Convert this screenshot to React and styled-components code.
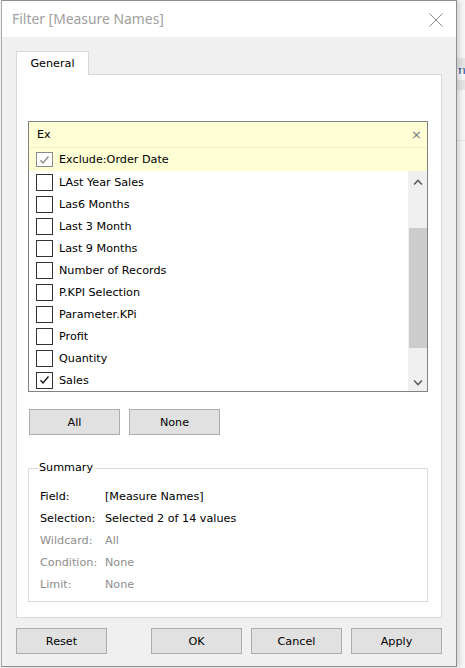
import React from 'react';
import styled, {createGlobalStyle} from 'styled-components';

const items = [
    {label: 'LAst Year Sales', checked: false},
    {label: 'Las6 Months', checked: false},
    {label: 'Last 3 Month', checked: false},
    {label: 'Last 9 Months', checked: false},
    {label: 'Number of Records', checked: false},
    {label: 'P.KPI Selection', checked: false},
    {label: 'Parameter.KPi', checked: false},
    {label: 'Profit', checked: false},
    {label: 'Quantity', checked: false},
    {label: 'Sales', checked: true},
];

const summary = [
    {label: 'Field:', value: '[Measure Names]', muted: false},
    {label: 'Selection:', value: 'Selected 2 of 14 values', muted: false},
    {label: 'Wildcard:', value: 'All', muted: true},
    {label: 'Condition:', value: 'None', muted: true},
    {label: 'Limit:', value: 'None', muted: true},
];

const CheckMark = ({color}) => (
    <svg width="11" height="10" viewBox="0 0 11 10">
        <path d="M1.5 5.2 L4 8 L9.5 1.5" fill="none" stroke={color} strokeWidth="1.4"/>
    </svg>
);

const Chevron = ({up}) => (
    <svg width="10" height="6" viewBox="0 0 10 6">
        <path d={up ? 'M1 5.5 L5 1.5 L9 5.5' : 'M1 0.5 L5 4.5 L9 0.5'} fill="none" stroke="#606060" strokeWidth="1.6"/>
    </svg>
);

const App = () => {
    return (
        <>
            <GlobalStyle/>
            <Screen>
                <Dialog>
                    <TitleBar>
                        <Title>Filter [Measure Names]</Title>
                        <CloseButton>
                            <svg width="14" height="14" viewBox="0 0 14 14">
                                <path d="M0.5 0.5 L13.5 13.5 M13.5 0.5 L0.5 13.5" stroke="#8a8a8a" strokeWidth="1"/>
                            </svg>
                        </CloseButton>
                    </TitleBar>
                    <Body>
                        <Tabs>
                            <Tab>General</Tab>
                        </Tabs>
                        <Panel>
                            <ListBox>
                                <SearchRow>
                                    <span>Ex</span>
                                    <ClearIcon>×</ClearIcon>
                                </SearchRow>
                                <ListRow $highlight>
                                    <CheckBox $disabled $h={15}>
                                        <CheckMark color="#8c8c8c"/>
                                    </CheckBox>
                                    <span>Exclude:Order Date</span>
                                </ListRow>
                                <ScrollArea>
                                    <Rows>
                                        {
                                            items.map((item, index) => (
                                                <ListRow key={index}>
                                                    <CheckBox>
                                                        {item.checked && <CheckMark color="#1a1a1a"/>}
                                                    </CheckBox>
                                                    <span>{item.label}</span>
                                                </ListRow>
                                            ))
                                        }
                                    </Rows>
                                    <ScrollBar>
                                        <Arrow><Chevron up/></Arrow>
                                        <Track>
                                            <Thumb/>
                                        </Track>
                                        <Arrow><Chevron/></Arrow>
                                    </ScrollBar>
                                </ScrollArea>
                            </ListBox>
                            <ButtonRow>
                                <Button>All</Button>
                                <Button>None</Button>
                            </ButtonRow>
                            <Summary>
                                <Legend>Summary</Legend>
                                {
                                    summary.map((row, index) => (
                                        <SummaryRow key={index} $muted={row.muted}>
                                            <SummaryLabel>{row.label}</SummaryLabel>
                                            <span>{row.value}</span>
                                        </SummaryRow>
                                    ))
                                }
                            </Summary>
                        </Panel>
                        <Footer>
                            <Button>Reset</Button>
                            <FooterRight>
                                <Button>OK</Button>
                                <Button>Cancel</Button>
                                <Button>Apply</Button>
                            </FooterRight>
                        </Footer>
                    </Body>
                </Dialog>
                <Backdrop>
                    <BackdropText>m</BackdropText>
                    <BackdropLine $top={60} $h={1}/>
                    <BackdropLine $top={19} $h={10}/>
                    <BackdropLine $top={30} $h={10}/>
                </Backdrop>
            </Screen>
        </>
    )
}

const GlobalStyle = createGlobalStyle`
  * {
    box-sizing: border-box;
  }

  body {
    margin: 0;
    background: #fbfbfb;
    font-family: "DejaVu Sans", Tahoma, sans-serif;
    font-size: 11.2px;
    color: #000;
  }
`;

const Screen = styled.div`
  display: flex;
  width: 465px;
  height: 668px;
  overflow: hidden;
`;

const Dialog = styled.div`
  margin-left: 1px;
  width: 456px;
  height: 667px;
  flex-shrink: 0;
  border: 1px solid #8f8f8f;
  border-left-color: #a8a8a8;
  background: #f0f0f0;
  display: flex;
  flex-direction: column;
  box-shadow: 2px 0 6px rgba(0, 0, 0, 0.18);
  position: relative;
  z-index: 1;
`;

const TitleBar = styled.div`
  height: 36px;
  background: #fff;
  display: flex;
  align-items: center;
  justify-content: space-between;
  padding: 0 13px 0 10px;
  flex-shrink: 0;
`;

const Title = styled.div`
  font-family: "Noto Sans", "Open Sans", sans-serif;
  font-size: 13.9px;
  color: #a0a0a0;
  margin-top: -1px;
`;

const CloseButton = styled.div`
  display: flex;
  margin-top: 1px;
`;

const Body = styled.div`
  flex: 1;
  padding: 14px 14px 0;
  display: flex;
  flex-direction: column;
`;

const Tabs = styled.div`
  display: flex;
  height: 23px;
`;

const Tab = styled.div`
  width: 73px;
  height: 24px;
  background: #fff;
  border: 1px solid #d9d9d9;
  border-bottom: none;
  display: flex;
  align-items: center;
  justify-content: center;
  position: relative;
  z-index: 1;
  padding-bottom: 1px;
`;

const Panel = styled.div`
  height: 544px;
  background: #fff;
  border: 1px solid #d9d9d9;
  padding: 46px 13px 0 11px;
  display: flex;
  flex-direction: column;
`;

const ListBox = styled.div`
  height: 271px;
  border: 1px solid #828282;
  display: flex;
  flex-direction: column;
  overflow: hidden;
`;

const SearchRow = styled.div`
  height: 26px;
  flex-shrink: 0;
  background: #ffffd6;
  border-bottom: 1px solid #f2f2c8;
  display: flex;
  align-items: center;
  justify-content: space-between;
  padding: 0 5px 0 8px;
`;

const ClearIcon = styled.span`
  color: #7a7a7a;
  font-size: 13px;
`;

const ListRow = styled.div`
  height: ${props => props.$highlight ? 23 : 22}px;
  flex-shrink: 0;
  display: flex;
  align-items: center;
  gap: 6px;
  padding-left: 7px;
  background: ${props => props.$highlight ? '#ffffd6' : 'transparent'};
  white-space: nowrap;
`;

const CheckBox = styled.div`
  width: 17px;
  height: ${props => props.$h || 17}px;
  border: 1px solid ${props => props.$disabled ? '#8c8c8c' : '#333'};
  background: #fff;
  display: flex;
  align-items: center;
  justify-content: center;
  flex-shrink: 0;
`;

const ScrollArea = styled.div`
  flex: 1;
  display: flex;
  min-height: 0;
`;

const Rows = styled.div`
  flex: 1;
  display: flex;
  flex-direction: column;
  overflow: hidden;
`;

const ScrollBar = styled.div`
  width: 19px;
  background: #f0f0f0;
  display: flex;
  flex-direction: column;
  flex-shrink: 0;
`;

const Arrow = styled.div`
  height: 19px;
  display: flex;
  align-items: center;
  justify-content: center;
  flex-shrink: 0;
  padding-top: 3px;
`;

const Track = styled.div`
  flex: 1;
  padding-top: 38px;
  padding-bottom: 24px;
  display: flex;
  padding-left: 1px;
`;

const Thumb = styled.div`
  flex: 1;
  background: #cdcdcd;
`;

const ButtonRow = styled.div`
  display: flex;
  gap: 9px;
  margin: 17px 0 0 1px;
`;

const Button = styled.button`
  width: 91px;
  height: 26px;
  background: #e1e1e1;
  border: 1px solid #adadad;
  font-family: "DejaVu Sans", Tahoma, sans-serif;
  font-size: 11.2px;
  color: #000;
  padding: 0;
  display: flex;
  align-items: center;
  justify-content: center;
  cursor: pointer;

  &:hover {
    background: #e5f1fb;
    border-color: #0078d7;
  }
`;

const Summary = styled.fieldset`
  margin: 26px 0 0;
  height: 141px;
  border: 1px solid #dcdcdc;
  padding: 10px 10px 0 11px;
  display: flex;
  flex-direction: column;
`;

const Legend = styled.legend`
  padding: 0 1px;
  margin-left: -2px;
  line-height: 14px;
`;

const SummaryRow = styled.div`
  height: 22px;
  display: flex;
  align-items: center;
  color: ${props => props.$muted ? '#8d8d8d' : '#000'};
`;

const SummaryLabel = styled.span`
  width: 65px;
  flex-shrink: 0;
`;

const Footer = styled.div`
  display: flex;
  justify-content: space-between;
  margin-top: 10px;
`;

const FooterRight = styled.div`
  display: flex;
  gap: 9px;
`;

const Backdrop = styled.div`
  flex: 1;
  position: relative;
  background: #f7f7f7;
`;

const BackdropText = styled.span`
  position: absolute;
  left: -3px;
  top: 63px;
  font-size: 12px;
  color: #1a3e8c;
`;

const BackdropLine = styled.div`
  position: absolute;
  left: 0;
  right: 0;
  top: ${props => props.$top * 2 + 20}px;
  height: ${props => props.$h}px;
  background: #e6e6e6;
`;

export default App;
